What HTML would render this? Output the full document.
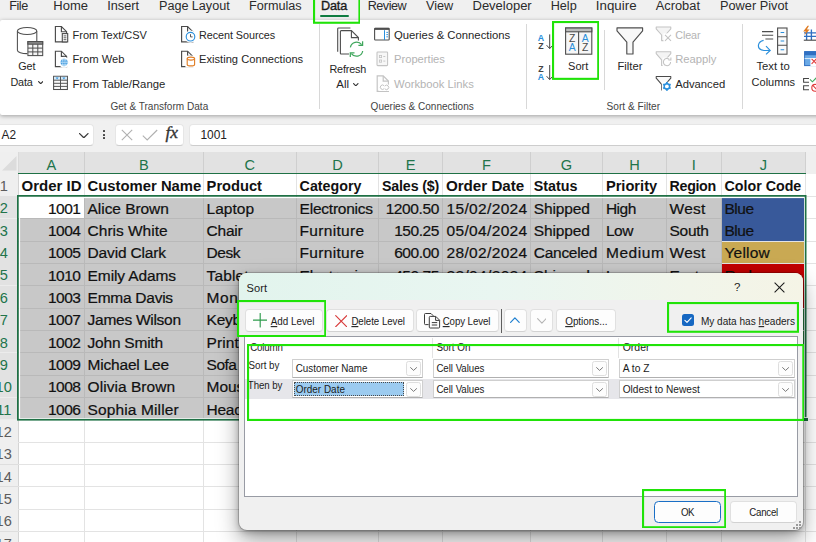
<!DOCTYPE html>
<html lang="en"><head><meta charset="utf-8"><title>Sort</title>
<style>
html,body{margin:0;padding:0;}
body{width:816px;height:542px;overflow:hidden;position:relative;background:#f0f0f0;font-family:"Liberation Sans",sans-serif;}
.t{position:absolute;line-height:1;white-space:pre;}
.b{position:absolute;box-sizing:content-box;}
u{text-decoration-thickness:1px;text-underline-offset:0.6px;}
</style></head><body>
<span class="t" style="left:9.30px;top:0px;font-size:12.65px;color:#2b2b2b;letter-spacing:-0.500px;">File</span>
<span class="t" style="left:53.30px;top:-1px;font-size:13.00px;color:#2b2b2b;">Home</span>
<span class="t" style="left:107.30px;top:0px;font-size:12.70px;color:#2b2b2b;letter-spacing:-0.010px;">Insert</span>
<span class="t" style="left:159.00px;top:0px;font-size:12.65px;color:#2b2b2b;letter-spacing:-0.033px;">Page Layout</span>
<span class="t" style="left:249.00px;top:0px;font-size:12.65px;color:#2b2b2b;letter-spacing:-0.007px;">Formulas</span>
<span class="t" style="left:367.70px;top:0px;font-size:12.65px;color:#2b2b2b;letter-spacing:-0.498px;">Review</span>
<span class="t" style="left:426.00px;top:0px;font-size:12.70px;color:#2b2b2b;">View</span>
<span class="t" style="left:472.50px;top:-1px;font-size:13.00px;color:#2b2b2b;letter-spacing:-0.010px;">Developer</span>
<span class="t" style="left:550.70px;top:0px;font-size:12.65px;color:#2b2b2b;">Help</span>
<span class="t" style="left:595.70px;top:-1px;font-size:13.30px;color:#2b2b2b;letter-spacing:0.050px;">Inquire</span>
<span class="t" style="left:655.70px;top:0px;font-size:12.85px;color:#2b2b2b;letter-spacing:0.005px;">Acrobat</span>
<span class="t" style="left:720.00px;top:0px;font-size:12.75px;color:#2b2b2b;">Power Pivot</span>
<span class="t" style="left:321.00px;top:0px;font-size:12.65px;color:#1a1a1a;letter-spacing:-0.152px;-webkit-text-stroke:0.35px #1a1a1a;">Data</span>
<div class="b" style="left:320.00px;top:14.70px;width:28.80px;height:2.20px;background:#107c41;border-radius:1.1px;"></div>
<div class="b" style="left:0.00px;top:19.50px;width:830.00px;height:95.50px;background:#fff;border-radius:2px 0 0 2px;box-shadow:0 1px 4px rgba(0,0,0,.34);"></div>
<span class="t" style="left:18.30px;top:61px;font-size:10.80px;color:#262626;letter-spacing:-0.144px;">Get</span>
<span class="t" style="left:10.50px;top:77px;font-size:10.80px;color:#262626;letter-spacing:-0.181px;">Data</span>
<span class="t" style="left:72.50px;top:30px;font-size:11.00px;color:#262626;">From Text/CSV</span>
<span class="t" style="left:72.50px;top:54px;font-size:11.15px;color:#262626;letter-spacing:0.008px;">From Web</span>
<span class="t" style="left:72.50px;top:79px;font-size:11.30px;color:#262626;">From Table/Range</span>
<span class="t" style="left:199.00px;top:30px;font-size:10.80px;color:#262626;letter-spacing:-0.049px;">Recent Sources</span>
<span class="t" style="left:199.00px;top:54px;font-size:11.15px;color:#262626;letter-spacing:0.008px;">Existing Connections</span>
<span class="t" style="left:110.40px;top:102px;font-size:10.05px;color:#444;letter-spacing:0.006px;">Get & Transform Data</span>
<div class="b" style="left:319.30px;top:24.00px;width:1.00px;height:85.00px;background:#d8d8d8;"></div>
<div class="b" style="left:525.50px;top:24.00px;width:1.00px;height:85.00px;background:#d8d8d8;"></div>
<div class="b" style="left:741.50px;top:24.00px;width:1.00px;height:85.00px;background:#d8d8d8;"></div>
<div class="b" style="left:604.30px;top:29.50px;width:1.00px;height:60.50px;background:#d8d8d8;"></div>
<span class="t" style="left:329.40px;top:64px;font-size:10.80px;color:#262626;letter-spacing:-0.150px;">Refresh</span>
<span class="t" style="left:336.30px;top:79px;font-size:11.40px;color:#262626;letter-spacing:0.023px;">All</span>
<span class="t" style="left:394.00px;top:30px;font-size:11.30px;color:#262626;">Queries & Connections</span>
<span class="t" style="left:394.00px;top:54px;font-size:11.20px;color:#b4b4b4;letter-spacing:-0.008px;">Properties</span>
<span class="t" style="left:394.00px;top:79px;font-size:11.25px;color:#b4b4b4;">Workbook Links</span>
<span class="t" style="left:370.60px;top:102px;font-size:10.05px;color:#444;letter-spacing:-0.008px;">Queries & Connections</span>
<span class="t" style="left:568.00px;top:61px;font-size:11.05px;color:#262626;letter-spacing:0.008px;">Sort</span>
<span class="t" style="left:617.50px;top:61px;font-size:11.25px;color:#262626;">Filter</span>
<span class="t" style="left:675.20px;top:30px;font-size:10.80px;color:#b4b4b4;letter-spacing:-0.103px;">Clear</span>
<span class="t" style="left:675.20px;top:54px;font-size:11.25px;color:#b4b4b4;letter-spacing:-0.015px;">Reapply</span>
<span class="t" style="left:675.20px;top:79px;font-size:11.25px;color:#262626;letter-spacing:-0.009px;">Advanced</span>
<span class="t" style="left:606.50px;top:102px;font-size:10.15px;color:#444;letter-spacing:0.009px;">Sort & Filter</span>
<span class="t" style="left:756.40px;top:61px;font-size:11.30px;color:#262626;letter-spacing:0.012px;">Text to</span>
<span class="t" style="left:751.60px;top:77px;font-size:11.00px;color:#262626;">Columns</span>
<svg class="b" style="left:37.60px;top:80.60px;" width="5.4" height="3.3" viewBox="0 0 5.4 3.3"><path d="M0.6 0.6 L2.7 2.6999999999999997 L4.800000000000001 0.6" fill="none" stroke="#333" stroke-width="1.15" stroke-linecap="round" stroke-linejoin="round"/></svg>
<svg class="b" style="left:353.40px;top:82.60px;" width="5.6" height="3.4" viewBox="0 0 5.6 3.4"><path d="M0.6 0.6 L2.8 2.8 L5.0 0.6" fill="none" stroke="#333" stroke-width="1.15" stroke-linecap="round" stroke-linejoin="round"/></svg>
<svg class="b" style="left:0;top:0" width="816" height="120" viewBox="0 0 816 120"><path d="M17.4 31 V50.2 a9.7 3.4 0 0 0 10 3.4 M36.8 31 V41" fill="none" stroke="#4e4e4e" stroke-width="1.05"/><ellipse cx="27.1" cy="31" rx="9.7" ry="3.5" fill="#fff" stroke="#4e4e4e" stroke-width="1.05"/><rect x="27.9" y="41.6" width="14.8" height="14" fill="#f4f4f4" stroke="#4e4e4e" stroke-width="1.05"/><rect x="27.9" y="41.6" width="14.8" height="2.6" fill="#8a8a8a" stroke="#4e4e4e" stroke-width="1.05"/><path d="M27.9 48.1 H42.7 M27.9 51.9 H42.7 M32.8 44.2 V55.6 M37.8 44.2 V55.6" fill="none" stroke="#4e4e4e" stroke-width="1"/><path d="M61.40 26.50 H55.40 V41.90 H66.60 V31.70 Z" fill="#fdfdfd" stroke="#4a4a4a" stroke-width="1.15" stroke-linejoin="miter"/><path d="M61.40 26.50 V31.70 H66.60" fill="none" stroke="#4a4a4a" stroke-width="1.15" stroke-linejoin="miter"/><rect x="62.3" y="33.6" width="5.4" height="8.3" fill="#fff" stroke="#4a4a4a" stroke-width="1.1"/><path d="M63.6 35.9 H66.4 M63.6 37.8 H66.4 M63.6 39.7 H66.4" stroke="#4a4a4a" stroke-width="0.9"/><path d="M61.40 51.20 H55.40 V66.60 H66.60 V56.40 Z" fill="#fdfdfd" stroke="#4a4a4a" stroke-width="1.15" stroke-linejoin="miter"/><path d="M61.40 51.20 V56.40 H66.60" fill="none" stroke="#4a4a4a" stroke-width="1.15" stroke-linejoin="miter"/><circle cx="64.1" cy="62.3" r="4.5" fill="#2a8fdc" stroke="#fff" stroke-width="2"/><path d="M59.8 62.3 H68.4 M64.1 58 V66.6 M61 59.8 H67.2 M61 64.8 H67.2" stroke="#d4ebfb" stroke-width="0.7" fill="none"/><ellipse cx="64.1" cy="62.3" rx="2" ry="4.3" fill="none" stroke="#d4ebfb" stroke-width="0.7"/><rect x="53.6" y="76.3" width="13.8" height="13.2" fill="#fafafa" stroke="#4e4e4e" stroke-width="1.05"/><rect x="54.1" y="76.8" width="12.8" height="3" fill="#d5eaf9"/><path d="M53.6 80.2 H67.4 M53.6 83.3 H67.4 M53.6 86.4 H67.4 M60.5 76.3 V89.5" stroke="#4e4e4e" stroke-width="0.95" fill="none"/><path d="M55.6 77.5 h3 l-1.5 1.7 Z M62.4 77.5 h3 l-1.5 1.7 Z" fill="#2a8fdc"/><path d="M187.60 26.50 H181.60 V41.90 H192.80 V31.70 Z" fill="#fdfdfd" stroke="#4a4a4a" stroke-width="1.15" stroke-linejoin="miter"/><path d="M187.60 26.50 V31.70 H192.80" fill="none" stroke="#4a4a4a" stroke-width="1.15" stroke-linejoin="miter"/><circle cx="190.5" cy="36.7" r="6.1" fill="#fff"/><circle cx="190.5" cy="36.7" r="4.3" fill="#fff" stroke="#2a8fdc" stroke-width="1.15"/><path d="M190.5 34.2 V36.9 H192.6" fill="none" stroke="#444" stroke-width="0.9"/><path d="M187.60 51.20 H181.60 V66.60 H192.80 V56.40 Z" fill="#fdfdfd" stroke="#4a4a4a" stroke-width="1.15" stroke-linejoin="miter"/><path d="M187.60 51.20 V56.40 H192.80" fill="none" stroke="#4a4a4a" stroke-width="1.15" stroke-linejoin="miter"/><rect x="185.4" y="55.6" width="11" height="12" fill="#fff"/><path d="M187.2 58.6 V64.4 a3.7 1.5 0 0 0 7.4 0 V58.6" fill="#fff" stroke="#e07c22" stroke-width="1.1"/><ellipse cx="190.9" cy="58.6" rx="3.7" ry="1.5" fill="#fff" stroke="#e07c22" stroke-width="1.1"/><path d="M350.4 28 H338.5 a0.8 0.8 0 0 0 -0.8 0.8 V51.8" fill="none" stroke="#4e4e4e" stroke-width="1.1"/><path d="M349 54 H341.2 a0.8 0.8 0 0 1 -0.8 -0.8 V31.4 a0.8 0.8 0 0 1 0.8 -0.8 H351.4 L358.4 37.6 V40.5" fill="none" stroke="#4e4e4e" stroke-width="1.1"/><path d="M351.4 30.8 V37.6 H358.2" fill="none" stroke="#4e4e4e" stroke-width="1.1"/><path d="M350.4 47.3 A6.3 6.3 0 0 1 361.6 44.6 M362.7 51 A6.3 6.3 0 0 1 351.4 53.6" fill="none" stroke="#3fa65c" stroke-width="1.25"/><path d="M362.6 41.2 V45.4 H358.4 M350.3 57 V52.8 H354.5" fill="none" stroke="#3fa65c" stroke-width="1.25"/><rect x="374.6" y="28.2" width="14.6" height="11.8" rx="0.8" fill="#fff" stroke="#4e4e4e" stroke-width="1.1"/><rect x="374.6" y="27.9" width="14.6" height="2" fill="#4e4e4e"/><path d="M384.5 30.2 V40" stroke="#2a8fdc" stroke-width="1"/><path d="M386.3 32.4 H388 M386.3 34.6 H388 M386.3 36.8 H388" stroke="#2a8fdc" stroke-width="0.9"/><rect x="377" y="52" width="10.6" height="13.6" rx="0.8" fill="#f7f7f7" stroke="#c3c3c3" stroke-width="1.05"/><rect x="379.4" y="55.4" width="2.2" height="2.2" fill="none" stroke="#c3c3c3" stroke-width="0.8"/><rect x="379.4" y="60" width="2.2" height="2.2" fill="none" stroke="#c3c3c3" stroke-width="0.8"/><path d="M383.3 56.5 H385.3 M383.3 61.1 H385.3" stroke="#c3c3c3" stroke-width="0.9"/><path d="M383.20 75.90 H377.20 V91.30 H388.40 V81.10 Z" fill="#fdfdfd" stroke="#c3c3c3" stroke-width="1.15" stroke-linejoin="miter"/><path d="M383.20 75.90 V81.10 H388.40" fill="none" stroke="#c3c3c3" stroke-width="1.15" stroke-linejoin="miter"/><rect x="379.2" y="84.6" width="10.4" height="6.4" fill="#fff"/><path d="M384.2 88.6 a2.2 2.2 0 1 1 0 -2.8 M384.8 86 a2.2 2.2 0 1 1 0 2.8" fill="none" stroke="#c3c3c3" stroke-width="1"/><text x="541" y="40.6" font-family="Liberation Sans, sans-serif" font-size="8.8" font-weight="bold" fill="#2a8fdc" text-anchor="middle">A</text><text x="541" y="49.2" font-family="Liberation Sans, sans-serif" font-size="8.8" font-weight="bold" fill="#444" text-anchor="middle">Z</text><text x="541" y="71.5" font-family="Liberation Sans, sans-serif" font-size="8.8" font-weight="bold" fill="#444" text-anchor="middle">Z</text><text x="541" y="80.1" font-family="Liberation Sans, sans-serif" font-size="8.8" font-weight="bold" fill="#2a8fdc" text-anchor="middle">A</text><path d="M549.7 34.4 V48.4 M546.6 45.2 L549.7 48.6 L552.8 45.2" fill="none" stroke="#444" stroke-width="1"/><path d="M549.7 65 V79.4 M546.6 76.2 L549.7 79.6 L552.8 76.2" fill="none" stroke="#444" stroke-width="1"/><rect x="565.6" y="28" width="26.2" height="26.2" fill="#f6f6f6" stroke="#4e4e4e" stroke-width="1.1"/><rect x="565.6" y="28" width="26.2" height="3.8" fill="#bdbdbd" stroke="#4e4e4e" stroke-width="1.1"/><path d="M578.6 31.8 V54.2" stroke="#4e4e4e" stroke-width="1.1"/><text x="572.2" y="41.6" font-family="Liberation Sans, sans-serif" font-size="10.4" font-weight="normal" fill="#4a4a4a" text-anchor="middle">Z</text><text x="572.2" y="51.4" font-family="Liberation Sans, sans-serif" font-size="10.4" font-weight="normal" fill="#2a8fdc" text-anchor="middle">A</text><text x="585.2" y="41.6" font-family="Liberation Sans, sans-serif" font-size="10.4" font-weight="normal" fill="#2a8fdc" text-anchor="middle">A</text><text x="585.2" y="51.4" font-family="Liberation Sans, sans-serif" font-size="10.4" font-weight="normal" fill="#4a4a4a" text-anchor="middle">Z</text><path d="M617 27.9 H642.6 V30.8 L633 42.2 V54 H626.8 V42.2 L617 30.8 Z" fill="#f8f8f8" stroke="#4e4e4e" stroke-width="1.15" stroke-linejoin="round"/><path d="M656.2 27 H670.8000000000001 V28.8 L665.4000000000001 35 V40.6 H661.6 V35 L656.2 28.8 Z" fill="#f4f4f4" stroke="#c3c3c3" stroke-width="1.05" stroke-linejoin="round"/><rect x="663.4" y="33.4" width="8.6" height="8.4" fill="#fff"/><path d="M665 34.8 L671 40.8 M671 34.8 L665 40.8" stroke="#c3c3c3" stroke-width="1.05"/><path d="M656.2 51.8 H670.8000000000001 V53.599999999999994 L665.4000000000001 59.8 V65.39999999999999 H661.6 V59.8 L656.2 53.599999999999994 Z" fill="#f4f4f4" stroke="#c3c3c3" stroke-width="1.05" stroke-linejoin="round"/><rect x="662.6" y="57.6" width="9.4" height="9.2" fill="#fff"/><path d="M670.6 62 a3.6 3.6 0 1 1 -1.4 -2.8 M670.9 57.6 V60 H668.4" fill="none" stroke="#c3c3c3" stroke-width="1.05"/><path d="M656.2 76.4 H670.8000000000001 V78.2 L665.4000000000001 84.4 V90.0 H661.6 V84.4 L656.2 78.2 Z" fill="#fafafa" stroke="#4a4a4a" stroke-width="1.05" stroke-linejoin="round"/><rect x="661.8" y="81.8" width="10" height="9.4" fill="#fff"/><circle cx="666.9" cy="86.4" r="2.7" fill="none" stroke="#2a8fdc" stroke-width="1.5"/><path d="M668.81 87.50 L670.62 88.55 M666.90 88.60 L666.90 90.70 M664.99 87.50 L663.18 88.55 M664.99 85.30 L663.18 84.25 M666.90 84.20 L666.90 82.10 M668.81 85.30 L670.62 84.25 " stroke="#2a8fdc" stroke-width="1.9" fill="none"/><circle cx="666.9" cy="86.4" r="0.9" fill="#fff"/><path d="M762 31.6 H773.2 M762 35.3 H773.2 M765.4 39 H773.2" stroke="#4e4e4e" stroke-width="1.05"/><path d="M763.6 40.4 C757.5 41.5 756.8 48.2 761.5 49.9 C764 50.7 767 50.6 769.8 50.4" fill="none" stroke="#2a8fdc" stroke-width="1.15"/><path d="M766 46.2 L770.2 50.4 L766 54.4" fill="none" stroke="#2a8fdc" stroke-width="1.15"/><rect x="777.6" y="28" width="9.4" height="26.2" fill="#fafafa" stroke="#4e4e4e" stroke-width="1.1"/><path d="M777.6 36.7 H787 M777.6 45.3 H787" stroke="#4e4e4e" stroke-width="1.05"/><path d="M780.6 32.4 H784.2 M780.6 41 H784.2 M780.6 49.7 H784.2" stroke="#2a8fdc" stroke-width="1.05"/><path d="M806.6 29.6 V40 M811.4 29.6 V40 M804 32.8 H816 M804 36.4 H816" stroke="#2f6fc2" stroke-width="1.35" fill="none"/><path d="M803.8 40.2 H816" stroke="#444" stroke-width="1.1"/><path d="M807.6 25.8 L803.2 31.6 H806 L804.2 35.6 L809.6 29.6 H806.8 L809 25.8 Z" fill="#e07c22"/><rect x="804.6" y="51.6" width="12" height="14" fill="#6aa9e6" stroke="#2f6fc2" stroke-width="1"/><rect x="804.6" y="51.6" width="12" height="3.6" fill="#2f6fc2"/><path d="M804.6 58.6 H816" stroke="#fff" stroke-width="0.8"/><rect x="810.4" y="58" width="6" height="8" fill="#fff"/><path d="M811.6 58.8 L816.5 63.8 M816.5 58.8 L811.6 63.8" stroke="#e03a3a" stroke-width="1.1"/><path d="M809 78.4 H803.6 V82.2 H809 M809 85.8 H803.6 V89.8 H809" fill="none" stroke="#444" stroke-width="1.05"/><path d="M810 79.4 L812.4 81.8 L816.5 77.6" fill="none" stroke="#3fa65c" stroke-width="1.1"/><circle cx="815.2" cy="87.8" r="3.4" fill="#fff" stroke="#e03a3a" stroke-width="1.1"/><path d="M812.8 85.4 L817 89.8" stroke="#e03a3a" stroke-width="1.1"/></svg>
<div class="b" style="left:-6.00px;top:123.60px;width:100.00px;height:22.00px;background:#fff;border-radius:4px;border:1px solid #e6e6e6;border-bottom:1px solid #cdcdcd;box-sizing:border-box;"></div>
<div class="b" style="left:114.50px;top:123.60px;width:69.20px;height:22.00px;background:#fff;border-radius:4px;border:1px solid #e6e6e6;border-bottom:1px solid #cdcdcd;box-sizing:border-box;"></div>
<div class="b" style="left:189.30px;top:123.60px;width:640.00px;height:22.00px;background:#fff;border-radius:4px;border:1px solid #e6e6e6;border-bottom:1px solid #cdcdcd;box-sizing:border-box;"></div>
<span class="t" style="left:1.50px;top:130px;font-size:11.85px;color:#222;letter-spacing:-0.016px;">A2</span>
<span class="t" style="left:200.40px;top:130px;font-size:11.90px;color:#222;letter-spacing:0.007px;">1001</span>
<svg class="b" style="left:79.40px;top:132.60px;" width="9.6" height="5.4" viewBox="0 0 9.6 5.4"><path d="M0.6 0.6 L4.8 4.800000000000001 L9.0 0.6" fill="none" stroke="#3a3a3a" stroke-width="1.3" stroke-linecap="round" stroke-linejoin="round"/></svg>
<div class="b" style="left:103.30px;top:130.00px;width:2.00px;height:2.00px;background:#444;border-radius:0.5px;"></div>
<div class="b" style="left:103.30px;top:133.60px;width:2.00px;height:2.00px;background:#444;border-radius:0.5px;"></div>
<div class="b" style="left:103.30px;top:137.20px;width:2.00px;height:2.00px;background:#444;border-radius:0.5px;"></div>
<svg class="b" style="left:120.50px;top:129.00px;" width="12" height="12" viewBox="0 0 12 12"><path d="M0.8 0.8 L11.2 11.2 M11.2 0.8 L0.8 11.2" stroke="#b0b0b0" stroke-width="1.1" fill="none"/></svg>
<svg class="b" style="left:141.50px;top:129.00px;" width="16" height="12" viewBox="0 0 16 12"><path d="M0.8 6.6 L5.2 11 L15.2 1" stroke="#b0b0b0" stroke-width="1.1" fill="none"/></svg>
<span class="t" style="left:165.6px;top:123.6px;font-size:17.5px;color:#333;font-family:'Liberation Serif',serif;font-style:italic;font-weight:normal;-webkit-text-stroke:0.35px #333;letter-spacing:-0.2px;">fx</span>
<div class="b" style="left:0.00px;top:152.20px;width:816.00px;height:400.00px;background:#fff;"></div>
<div class="b" style="left:0.00px;top:152.20px;width:18.30px;height:21.80px;background:#efefef;"></div>
<div class="b" style="left:18.30px;top:152.20px;width:787.40px;height:21.80px;background:#e2e2e2;"></div>
<div class="b" style="left:805.70px;top:152.20px;width:100.00px;height:21.80px;background:#efefef;"></div>
<svg class="b" style="left:2.00px;top:156.00px;" width="14.5" height="14.5" viewBox="0 0 14.5 14.5"><path d="M14.5 0 L14.5 14.5 L0 14.5 Z" fill="#dcdcdc"/></svg>
<div class="b" style="left:83.80px;top:152.20px;width:1.00px;height:20.60px;background:#cfcfcf;"></div>
<div class="b" style="left:202.80px;top:152.20px;width:1.00px;height:20.60px;background:#cfcfcf;"></div>
<div class="b" style="left:295.80px;top:152.20px;width:1.00px;height:20.60px;background:#cfcfcf;"></div>
<div class="b" style="left:378.10px;top:152.20px;width:1.00px;height:20.60px;background:#cfcfcf;"></div>
<div class="b" style="left:442.10px;top:152.20px;width:1.00px;height:20.60px;background:#cfcfcf;"></div>
<div class="b" style="left:530.00px;top:152.20px;width:1.00px;height:20.60px;background:#cfcfcf;"></div>
<div class="b" style="left:602.10px;top:152.20px;width:1.00px;height:20.60px;background:#cfcfcf;"></div>
<div class="b" style="left:665.80px;top:152.20px;width:1.00px;height:20.60px;background:#cfcfcf;"></div>
<div class="b" style="left:720.70px;top:152.20px;width:1.00px;height:20.60px;background:#cfcfcf;"></div>
<div class="b" style="left:805.20px;top:152.20px;width:1.00px;height:21.80px;background:#d0d0d0;"></div>
<div class="b" style="left:17.60px;top:152.20px;width:1.00px;height:21.80px;background:#dadada;"></div>
<span class="t" style="left:46.43px;top:158px;font-size:14.60px;color:#21744a;">A</span>
<span class="t" style="left:138.93px;top:158px;font-size:14.60px;color:#21744a;">B</span>
<span class="t" style="left:244.53px;top:158px;font-size:14.60px;color:#21744a;">C</span>
<span class="t" style="left:332.18px;top:158px;font-size:14.60px;color:#21744a;">D</span>
<span class="t" style="left:405.73px;top:158px;font-size:14.60px;color:#21744a;">E</span>
<span class="t" style="left:482.09px;top:158px;font-size:14.60px;color:#21744a;">F</span>
<span class="t" style="left:560.87px;top:158px;font-size:14.60px;color:#21744a;">G</span>
<span class="t" style="left:629.18px;top:158px;font-size:14.60px;color:#21744a;">H</span>
<span class="t" style="left:691.72px;top:158px;font-size:14.60px;color:#21744a;">I</span>
<span class="t" style="left:759.80px;top:158px;font-size:14.60px;color:#21744a;">J</span>
<div class="b" style="left:0.00px;top:174.00px;width:18.30px;height:22.35px;background:#efefef;"></div>
<div class="b" style="left:0.00px;top:195.85px;width:18.30px;height:1.00px;background:#dedede;"></div>
<span class="t" style="left:-0.36px;top:179px;font-size:14.60px;color:#5c5c5c;">1</span>
<div class="b" style="left:0.00px;top:196.35px;width:18.30px;height:22.35px;background:#e2e2e2;"></div>
<div class="b" style="left:0.00px;top:218.20px;width:18.30px;height:1.00px;background:#ececec;"></div>
<span class="t" style="left:-0.36px;top:201px;font-size:14.60px;color:#21744a;">2</span>
<div class="b" style="left:0.00px;top:218.70px;width:18.30px;height:22.35px;background:#e2e2e2;"></div>
<div class="b" style="left:0.00px;top:240.55px;width:18.30px;height:1.00px;background:#ececec;"></div>
<span class="t" style="left:-0.36px;top:224px;font-size:14.60px;color:#21744a;">3</span>
<div class="b" style="left:0.00px;top:241.05px;width:18.30px;height:22.35px;background:#e2e2e2;"></div>
<div class="b" style="left:0.00px;top:262.90px;width:18.30px;height:1.00px;background:#ececec;"></div>
<span class="t" style="left:-0.36px;top:246px;font-size:14.60px;color:#21744a;">4</span>
<div class="b" style="left:0.00px;top:263.40px;width:18.30px;height:22.35px;background:#e2e2e2;"></div>
<div class="b" style="left:0.00px;top:285.25px;width:18.30px;height:1.00px;background:#ececec;"></div>
<span class="t" style="left:-0.36px;top:268px;font-size:14.60px;color:#21744a;">5</span>
<div class="b" style="left:0.00px;top:285.75px;width:18.30px;height:22.35px;background:#e2e2e2;"></div>
<div class="b" style="left:0.00px;top:307.60px;width:18.30px;height:1.00px;background:#ececec;"></div>
<span class="t" style="left:-0.36px;top:291px;font-size:14.60px;color:#21744a;">6</span>
<div class="b" style="left:0.00px;top:308.10px;width:18.30px;height:22.35px;background:#e2e2e2;"></div>
<div class="b" style="left:0.00px;top:329.95px;width:18.30px;height:1.00px;background:#ececec;"></div>
<span class="t" style="left:-0.36px;top:313px;font-size:14.60px;color:#21744a;">7</span>
<div class="b" style="left:0.00px;top:330.45px;width:18.30px;height:22.35px;background:#e2e2e2;"></div>
<div class="b" style="left:0.00px;top:352.30px;width:18.30px;height:1.00px;background:#ececec;"></div>
<span class="t" style="left:-0.36px;top:336px;font-size:14.60px;color:#21744a;">8</span>
<div class="b" style="left:0.00px;top:352.80px;width:18.30px;height:22.35px;background:#e2e2e2;"></div>
<div class="b" style="left:0.00px;top:374.65px;width:18.30px;height:1.00px;background:#ececec;"></div>
<span class="t" style="left:-0.36px;top:358px;font-size:14.60px;color:#21744a;">9</span>
<div class="b" style="left:0.00px;top:375.15px;width:18.30px;height:22.35px;background:#e2e2e2;"></div>
<div class="b" style="left:0.00px;top:397.00px;width:18.30px;height:1.00px;background:#ececec;"></div>
<span class="t" style="left:-4.42px;top:380px;font-size:14.60px;color:#21744a;">10</span>
<div class="b" style="left:0.00px;top:397.50px;width:18.30px;height:22.35px;background:#e2e2e2;"></div>
<div class="b" style="left:0.00px;top:419.35px;width:18.30px;height:1.00px;background:#ececec;"></div>
<span class="t" style="left:-3.88px;top:403px;font-size:14.60px;color:#21744a;">11</span>
<div class="b" style="left:0.00px;top:419.85px;width:18.30px;height:22.35px;background:#efefef;"></div>
<div class="b" style="left:0.00px;top:441.70px;width:18.30px;height:1.00px;background:#dedede;"></div>
<span class="t" style="left:-4.42px;top:425px;font-size:14.60px;color:#5c5c5c;">12</span>
<div class="b" style="left:0.00px;top:442.20px;width:18.30px;height:22.35px;background:#efefef;"></div>
<div class="b" style="left:0.00px;top:464.05px;width:18.30px;height:1.00px;background:#dedede;"></div>
<span class="t" style="left:-4.42px;top:447px;font-size:14.60px;color:#5c5c5c;">13</span>
<div class="b" style="left:0.00px;top:464.55px;width:18.30px;height:22.35px;background:#efefef;"></div>
<div class="b" style="left:0.00px;top:486.40px;width:18.30px;height:1.00px;background:#dedede;"></div>
<span class="t" style="left:-4.42px;top:470px;font-size:14.60px;color:#5c5c5c;">14</span>
<div class="b" style="left:0.00px;top:486.90px;width:18.30px;height:22.35px;background:#efefef;"></div>
<div class="b" style="left:0.00px;top:508.75px;width:18.30px;height:1.00px;background:#dedede;"></div>
<span class="t" style="left:-4.42px;top:492px;font-size:14.60px;color:#5c5c5c;">15</span>
<div class="b" style="left:0.00px;top:509.25px;width:18.30px;height:22.35px;background:#efefef;"></div>
<div class="b" style="left:0.00px;top:531.10px;width:18.30px;height:1.00px;background:#dedede;"></div>
<span class="t" style="left:-4.42px;top:514px;font-size:14.60px;color:#5c5c5c;">16</span>
<div class="b" style="left:0.00px;top:531.60px;width:18.30px;height:22.35px;background:#efefef;"></div>
<div class="b" style="left:0.00px;top:553.45px;width:18.30px;height:1.00px;background:#dedede;"></div>
<span class="t" style="left:-4.42px;top:537px;font-size:14.60px;color:#5c5c5c;">17</span>
<div class="b" style="left:17.60px;top:174.00px;width:1.00px;height:400.00px;background:#d4d4d4;"></div>
<div class="b" style="left:18.30px;top:196.35px;width:787.40px;height:223.50px;background:#c8c8c8;"></div>
<div class="b" style="left:18.30px;top:196.35px;width:66.00px;height:22.35px;background:#fff;"></div>
<div class="b" style="left:18.30px;top:195.85px;width:816.00px;height:1.00px;background:#e3e3e3;"></div>
<div class="b" style="left:18.30px;top:218.20px;width:816.00px;height:1.00px;background:#e3e3e3;"></div>
<div class="b" style="left:18.30px;top:218.20px;width:702.90px;height:1.00px;background:#b9b9b9;"></div>
<div class="b" style="left:18.30px;top:240.55px;width:816.00px;height:1.00px;background:#e3e3e3;"></div>
<div class="b" style="left:18.30px;top:240.55px;width:702.90px;height:1.00px;background:#b9b9b9;"></div>
<div class="b" style="left:18.30px;top:262.90px;width:816.00px;height:1.00px;background:#e3e3e3;"></div>
<div class="b" style="left:18.30px;top:262.90px;width:702.90px;height:1.00px;background:#b9b9b9;"></div>
<div class="b" style="left:18.30px;top:285.25px;width:816.00px;height:1.00px;background:#e3e3e3;"></div>
<div class="b" style="left:18.30px;top:285.25px;width:702.90px;height:1.00px;background:#b9b9b9;"></div>
<div class="b" style="left:18.30px;top:307.60px;width:816.00px;height:1.00px;background:#e3e3e3;"></div>
<div class="b" style="left:18.30px;top:307.60px;width:702.90px;height:1.00px;background:#b9b9b9;"></div>
<div class="b" style="left:18.30px;top:329.95px;width:816.00px;height:1.00px;background:#e3e3e3;"></div>
<div class="b" style="left:18.30px;top:329.95px;width:702.90px;height:1.00px;background:#b9b9b9;"></div>
<div class="b" style="left:18.30px;top:352.30px;width:816.00px;height:1.00px;background:#e3e3e3;"></div>
<div class="b" style="left:18.30px;top:352.30px;width:702.90px;height:1.00px;background:#b9b9b9;"></div>
<div class="b" style="left:18.30px;top:374.65px;width:816.00px;height:1.00px;background:#e3e3e3;"></div>
<div class="b" style="left:18.30px;top:374.65px;width:702.90px;height:1.00px;background:#b9b9b9;"></div>
<div class="b" style="left:18.30px;top:397.00px;width:816.00px;height:1.00px;background:#e3e3e3;"></div>
<div class="b" style="left:18.30px;top:397.00px;width:702.90px;height:1.00px;background:#b9b9b9;"></div>
<div class="b" style="left:18.30px;top:419.35px;width:816.00px;height:1.00px;background:#e3e3e3;"></div>
<div class="b" style="left:18.30px;top:441.70px;width:816.00px;height:1.00px;background:#e3e3e3;"></div>
<div class="b" style="left:18.30px;top:464.05px;width:816.00px;height:1.00px;background:#e3e3e3;"></div>
<div class="b" style="left:18.30px;top:486.40px;width:816.00px;height:1.00px;background:#e3e3e3;"></div>
<div class="b" style="left:18.30px;top:508.75px;width:816.00px;height:1.00px;background:#e3e3e3;"></div>
<div class="b" style="left:18.30px;top:531.10px;width:816.00px;height:1.00px;background:#e3e3e3;"></div>
<div class="b" style="left:18.30px;top:553.45px;width:816.00px;height:1.00px;background:#e3e3e3;"></div>
<div class="b" style="left:83.80px;top:174.00px;width:1.00px;height:400.00px;background:#e3e3e3;"></div>
<div class="b" style="left:83.80px;top:196.35px;width:1.00px;height:223.50px;background:#b9b9b9;"></div>
<div class="b" style="left:202.80px;top:174.00px;width:1.00px;height:400.00px;background:#e3e3e3;"></div>
<div class="b" style="left:202.80px;top:196.35px;width:1.00px;height:223.50px;background:#b9b9b9;"></div>
<div class="b" style="left:295.80px;top:174.00px;width:1.00px;height:400.00px;background:#e3e3e3;"></div>
<div class="b" style="left:295.80px;top:196.35px;width:1.00px;height:223.50px;background:#b9b9b9;"></div>
<div class="b" style="left:378.10px;top:174.00px;width:1.00px;height:400.00px;background:#e3e3e3;"></div>
<div class="b" style="left:378.10px;top:196.35px;width:1.00px;height:223.50px;background:#b9b9b9;"></div>
<div class="b" style="left:442.10px;top:174.00px;width:1.00px;height:400.00px;background:#e3e3e3;"></div>
<div class="b" style="left:442.10px;top:196.35px;width:1.00px;height:223.50px;background:#b9b9b9;"></div>
<div class="b" style="left:530.00px;top:174.00px;width:1.00px;height:400.00px;background:#e3e3e3;"></div>
<div class="b" style="left:530.00px;top:196.35px;width:1.00px;height:223.50px;background:#b9b9b9;"></div>
<div class="b" style="left:602.10px;top:174.00px;width:1.00px;height:400.00px;background:#e3e3e3;"></div>
<div class="b" style="left:602.10px;top:196.35px;width:1.00px;height:223.50px;background:#b9b9b9;"></div>
<div class="b" style="left:665.80px;top:174.00px;width:1.00px;height:400.00px;background:#e3e3e3;"></div>
<div class="b" style="left:665.80px;top:196.35px;width:1.00px;height:223.50px;background:#b9b9b9;"></div>
<div class="b" style="left:720.70px;top:174.00px;width:1.00px;height:400.00px;background:#e3e3e3;"></div>
<div class="b" style="left:720.70px;top:196.35px;width:1.00px;height:223.50px;background:#b9b9b9;"></div>
<div class="b" style="left:805.20px;top:174.00px;width:1.00px;height:400.00px;background:#e3e3e3;"></div>
<div class="b" style="left:721.70px;top:196.85px;width:84.00px;height:21.85px;background:#38599a;"></div>
<div class="b" style="left:721.70px;top:219.20px;width:84.00px;height:21.85px;background:#38599a;"></div>
<div class="b" style="left:721.70px;top:241.55px;width:84.00px;height:21.85px;background:#c9a953;"></div>
<div class="b" style="left:721.70px;top:263.90px;width:84.00px;height:21.85px;background:#c20000;"></div>
<div class="b" style="left:721.70px;top:286.25px;width:84.00px;height:21.85px;background:#c20000;"></div>
<div class="b" style="left:721.70px;top:308.60px;width:84.00px;height:21.85px;background:#2f8f4a;"></div>
<div class="b" style="left:721.70px;top:330.95px;width:84.00px;height:21.85px;background:#2f8f4a;"></div>
<div class="b" style="left:721.70px;top:353.30px;width:84.00px;height:21.85px;background:#c9a953;"></div>
<div class="b" style="left:721.70px;top:375.65px;width:84.00px;height:21.85px;background:#38599a;"></div>
<div class="b" style="left:721.70px;top:398.00px;width:84.00px;height:21.85px;background:#2f8f4a;"></div>
<div class="b" style="left:18.30px;top:172.80px;width:788.20px;height:1.60px;background:#1f7145;"></div>
<svg class="b" style="left:18.90px;top:196.70px;" width="786.10" height="222.20"><rect x="0.55" y="0.55" width="785.00" height="221.10" rx="0" fill="none" stroke="#fff" stroke-width="1.1"/></svg>
<svg class="b" style="left:17.20px;top:195.00px;" width="789.50" height="225.60"><rect x="0.85" y="0.85" width="787.80" height="223.90" rx="0" fill="none" stroke="#1f7145" stroke-width="1.7"/></svg>
<div class="b" style="left:804.00px;top:418.30px;width:3.80px;height:3.20px;background:#1b6a3f;box-shadow:0 0 0 0.9px #fff;"></div>
<span class="t" style="left:21.60px;top:178px;font-size:15.00px;color:#111;font-weight:bold;">Order ID</span>
<span class="t" style="left:87.60px;top:179px;font-size:14.85px;color:#111;letter-spacing:-0.012px;font-weight:bold;">Customer Name</span>
<span class="t" style="left:206.60px;top:179px;font-size:14.70px;color:#111;letter-spacing:-0.011px;font-weight:bold;">Product</span>
<span class="t" style="left:299.60px;top:179px;font-size:14.25px;color:#111;font-weight:bold;">Category</span>
<span class="t" style="left:381.90px;top:179px;font-size:14.25px;color:#111;letter-spacing:-0.142px;font-weight:bold;">Sales ($)</span>
<span class="t" style="left:445.90px;top:178px;font-size:15.20px;color:#111;letter-spacing:-0.009px;font-weight:bold;">Order Date</span>
<span class="t" style="left:533.80px;top:179px;font-size:14.30px;color:#111;letter-spacing:0.013px;font-weight:bold;">Status</span>
<span class="t" style="left:605.90px;top:179px;font-size:14.65px;color:#111;font-weight:bold;">Priority</span>
<span class="t" style="left:669.60px;top:179px;font-size:14.25px;color:#111;letter-spacing:-0.342px;font-weight:bold;">Region</span>
<span class="t" style="left:724.50px;top:179px;font-size:14.25px;color:#111;font-weight:bold;">Color Code</span>
<span class="t" style="left:48.01px;top:201px;font-size:15.50px;color:#111;letter-spacing:-0.500px;-webkit-text-stroke:0.22px #111;">1001</span>
<span class="t" style="left:87.60px;top:201px;font-size:15.50px;color:#111;letter-spacing:-0.059px;-webkit-text-stroke:0.22px #111;">Alice Brown</span>
<span class="t" style="left:206.60px;top:201px;font-size:15.50px;color:#111;letter-spacing:0.014px;-webkit-text-stroke:0.22px #111;">Laptop</span>
<span class="t" style="left:299.60px;top:201px;font-size:15.50px;color:#111;letter-spacing:-0.230px;-webkit-text-stroke:0.22px #111;">Electronics</span>
<span class="t" style="left:385.64px;top:201px;font-size:15.50px;color:#111;letter-spacing:-0.395px;-webkit-text-stroke:0.22px #111;">1200.50</span>
<span class="t" style="left:446.54px;top:201px;font-size:15.50px;color:#111;letter-spacing:0.342px;-webkit-text-stroke:0.22px #111;">15/02/2024</span>
<span class="t" style="left:533.80px;top:201px;font-size:15.50px;color:#111;letter-spacing:-0.147px;-webkit-text-stroke:0.22px #111;">Shipped</span>
<span class="t" style="left:605.90px;top:201px;font-size:15.50px;color:#111;letter-spacing:-0.500px;-webkit-text-stroke:0.22px #111;">High</span>
<span class="t" style="left:669.60px;top:201px;font-size:15.50px;color:#111;letter-spacing:0.190px;-webkit-text-stroke:0.22px #111;">West</span>
<span class="t" style="left:724.50px;top:201px;font-size:15.50px;color:#111;letter-spacing:-0.500px;-webkit-text-stroke:0.22px #111;">Blue</span>
<span class="t" style="left:48.01px;top:223px;font-size:15.50px;color:#111;letter-spacing:-0.500px;-webkit-text-stroke:0.22px #111;">1004</span>
<span class="t" style="left:87.60px;top:223px;font-size:15.50px;color:#111;letter-spacing:-0.014px;-webkit-text-stroke:0.22px #111;">Chris White</span>
<span class="t" style="left:206.60px;top:223px;font-size:15.50px;color:#111;letter-spacing:-0.261px;-webkit-text-stroke:0.22px #111;">Chair</span>
<span class="t" style="left:299.60px;top:223px;font-size:15.50px;color:#111;letter-spacing:0.312px;-webkit-text-stroke:0.22px #111;">Furniture</span>
<span class="t" style="left:394.16px;top:223px;font-size:15.50px;color:#111;letter-spacing:-0.458px;-webkit-text-stroke:0.22px #111;">150.25</span>
<span class="t" style="left:446.54px;top:223px;font-size:15.50px;color:#111;letter-spacing:0.342px;-webkit-text-stroke:0.22px #111;">05/04/2024</span>
<span class="t" style="left:533.80px;top:223px;font-size:15.50px;color:#111;letter-spacing:-0.147px;-webkit-text-stroke:0.22px #111;">Shipped</span>
<span class="t" style="left:605.90px;top:223px;font-size:15.50px;color:#111;letter-spacing:-0.500px;-webkit-text-stroke:0.22px #111;">Low</span>
<span class="t" style="left:669.60px;top:223px;font-size:15.50px;color:#111;letter-spacing:-0.333px;-webkit-text-stroke:0.22px #111;">South</span>
<span class="t" style="left:724.50px;top:223px;font-size:15.50px;color:#111;letter-spacing:-0.500px;-webkit-text-stroke:0.22px #111;">Blue</span>
<span class="t" style="left:48.01px;top:245px;font-size:15.50px;color:#111;letter-spacing:-0.500px;-webkit-text-stroke:0.22px #111;">1005</span>
<span class="t" style="left:87.60px;top:245px;font-size:15.50px;color:#111;letter-spacing:-0.171px;-webkit-text-stroke:0.22px #111;">David Clark</span>
<span class="t" style="left:206.60px;top:245px;font-size:15.50px;color:#111;letter-spacing:-0.500px;-webkit-text-stroke:0.22px #111;">Desk</span>
<span class="t" style="left:299.60px;top:245px;font-size:15.50px;color:#111;letter-spacing:0.312px;-webkit-text-stroke:0.22px #111;">Furniture</span>
<span class="t" style="left:394.16px;top:245px;font-size:15.50px;color:#111;letter-spacing:-0.458px;-webkit-text-stroke:0.22px #111;">600.00</span>
<span class="t" style="left:446.54px;top:245px;font-size:15.50px;color:#111;letter-spacing:0.342px;-webkit-text-stroke:0.22px #111;">28/02/2024</span>
<span class="t" style="left:533.80px;top:245px;font-size:15.50px;color:#111;letter-spacing:-0.284px;-webkit-text-stroke:0.22px #111;">Canceled</span>
<span class="t" style="left:605.90px;top:245px;font-size:15.50px;color:#111;letter-spacing:0.580px;-webkit-text-stroke:0.22px #111;">Medium</span>
<span class="t" style="left:669.60px;top:245px;font-size:15.50px;color:#111;letter-spacing:0.190px;-webkit-text-stroke:0.22px #111;">West</span>
<span class="t" style="left:724.50px;top:245px;font-size:15.50px;color:#111;letter-spacing:0.190px;-webkit-text-stroke:0.22px #111;">Yellow</span>
<span class="t" style="left:48.01px;top:268px;font-size:15.50px;color:#111;letter-spacing:-0.500px;-webkit-text-stroke:0.22px #111;">1010</span>
<span class="t" style="left:87.60px;top:268px;font-size:15.50px;color:#111;letter-spacing:-0.109px;-webkit-text-stroke:0.22px #111;">Emily Adams</span>
<span class="t" style="left:206.60px;top:268px;font-size:15.50px;color:#111;letter-spacing:0.112px;-webkit-text-stroke:0.22px #111;">Tablet</span>
<span class="t" style="left:299.60px;top:268px;font-size:15.50px;color:#111;letter-spacing:-0.230px;-webkit-text-stroke:0.22px #111;">Electronics</span>
<span class="t" style="left:394.16px;top:268px;font-size:15.50px;color:#111;letter-spacing:-0.458px;-webkit-text-stroke:0.22px #111;">450.75</span>
<span class="t" style="left:446.54px;top:268px;font-size:15.50px;color:#111;letter-spacing:0.342px;-webkit-text-stroke:0.22px #111;">22/04/2024</span>
<span class="t" style="left:533.80px;top:268px;font-size:15.50px;color:#111;letter-spacing:-0.147px;-webkit-text-stroke:0.22px #111;">Shipped</span>
<span class="t" style="left:605.90px;top:268px;font-size:15.50px;color:#111;letter-spacing:-0.500px;-webkit-text-stroke:0.22px #111;">Low</span>
<span class="t" style="left:669.60px;top:268px;font-size:15.50px;color:#111;letter-spacing:-0.500px;-webkit-text-stroke:0.22px #111;">East</span>
<span class="t" style="left:724.50px;top:268px;font-size:15.50px;color:#111;letter-spacing:-0.500px;-webkit-text-stroke:0.22px #111;">Red</span>
<span class="t" style="left:48.01px;top:290px;font-size:15.50px;color:#111;letter-spacing:-0.500px;-webkit-text-stroke:0.22px #111;">1003</span>
<span class="t" style="left:87.60px;top:290px;font-size:15.50px;color:#111;letter-spacing:-0.265px;-webkit-text-stroke:0.22px #111;">Emma Davis</span>
<span class="t" style="left:206.60px;top:290px;font-size:15.50px;color:#111;letter-spacing:0.600px;-webkit-text-stroke:0.22px #111;">Monitor</span>
<span class="t" style="left:299.60px;top:290px;font-size:15.50px;color:#111;letter-spacing:-0.230px;-webkit-text-stroke:0.22px #111;">Electronics</span>
<span class="t" style="left:394.16px;top:290px;font-size:15.50px;color:#111;letter-spacing:-0.458px;-webkit-text-stroke:0.22px #111;">320.00</span>
<span class="t" style="left:446.54px;top:290px;font-size:15.50px;color:#111;letter-spacing:0.342px;-webkit-text-stroke:0.22px #111;">10/03/2024</span>
<span class="t" style="left:533.80px;top:290px;font-size:15.50px;color:#111;letter-spacing:-0.414px;-webkit-text-stroke:0.22px #111;">Pending</span>
<span class="t" style="left:605.90px;top:290px;font-size:15.50px;color:#111;letter-spacing:-0.500px;-webkit-text-stroke:0.22px #111;">High</span>
<span class="t" style="left:669.60px;top:290px;font-size:15.50px;color:#111;letter-spacing:0.290px;-webkit-text-stroke:0.22px #111;">North</span>
<span class="t" style="left:724.50px;top:290px;font-size:15.50px;color:#111;letter-spacing:-0.500px;-webkit-text-stroke:0.22px #111;">Red</span>
<span class="t" style="left:48.01px;top:312px;font-size:15.50px;color:#111;letter-spacing:-0.500px;-webkit-text-stroke:0.22px #111;">1007</span>
<span class="t" style="left:87.60px;top:312px;font-size:15.50px;color:#111;letter-spacing:-0.272px;-webkit-text-stroke:0.22px #111;">James Wilson</span>
<span class="t" style="left:206.60px;top:312px;font-size:15.50px;color:#111;letter-spacing:-0.291px;-webkit-text-stroke:0.22px #111;">Keyboard</span>
<span class="t" style="left:299.60px;top:312px;font-size:15.50px;color:#111;letter-spacing:-0.230px;-webkit-text-stroke:0.22px #111;">Electronics</span>
<span class="t" style="left:402.47px;top:312px;font-size:15.50px;color:#111;letter-spacing:-0.500px;-webkit-text-stroke:0.22px #111;">75.99</span>
<span class="t" style="left:446.54px;top:312px;font-size:15.50px;color:#111;letter-spacing:0.342px;-webkit-text-stroke:0.22px #111;">18/03/2024</span>
<span class="t" style="left:533.80px;top:312px;font-size:15.50px;color:#111;letter-spacing:-0.147px;-webkit-text-stroke:0.22px #111;">Shipped</span>
<span class="t" style="left:605.90px;top:312px;font-size:15.50px;color:#111;letter-spacing:0.580px;-webkit-text-stroke:0.22px #111;">Medium</span>
<span class="t" style="left:669.60px;top:312px;font-size:15.50px;color:#111;letter-spacing:-0.500px;-webkit-text-stroke:0.22px #111;">East</span>
<span class="t" style="left:724.50px;top:312px;font-size:15.50px;color:#111;letter-spacing:-0.500px;-webkit-text-stroke:0.22px #111;">Green</span>
<span class="t" style="left:48.01px;top:335px;font-size:15.50px;color:#111;letter-spacing:-0.500px;-webkit-text-stroke:0.22px #111;">1002</span>
<span class="t" style="left:87.60px;top:335px;font-size:15.50px;color:#111;letter-spacing:-0.231px;-webkit-text-stroke:0.22px #111;">John Smith</span>
<span class="t" style="left:206.60px;top:335px;font-size:15.50px;color:#111;letter-spacing:0.084px;-webkit-text-stroke:0.22px #111;">Printer</span>
<span class="t" style="left:299.60px;top:335px;font-size:15.50px;color:#111;letter-spacing:-0.230px;-webkit-text-stroke:0.22px #111;">Electronics</span>
<span class="t" style="left:394.16px;top:335px;font-size:15.50px;color:#111;letter-spacing:-0.458px;-webkit-text-stroke:0.22px #111;">210.40</span>
<span class="t" style="left:446.54px;top:335px;font-size:15.50px;color:#111;letter-spacing:0.342px;-webkit-text-stroke:0.22px #111;">01/03/2024</span>
<span class="t" style="left:533.80px;top:335px;font-size:15.50px;color:#111;letter-spacing:-0.414px;-webkit-text-stroke:0.22px #111;">Pending</span>
<span class="t" style="left:605.90px;top:335px;font-size:15.50px;color:#111;letter-spacing:-0.500px;-webkit-text-stroke:0.22px #111;">Low</span>
<span class="t" style="left:669.60px;top:335px;font-size:15.50px;color:#111;letter-spacing:-0.333px;-webkit-text-stroke:0.22px #111;">South</span>
<span class="t" style="left:724.50px;top:335px;font-size:15.50px;color:#111;letter-spacing:-0.500px;-webkit-text-stroke:0.22px #111;">Green</span>
<span class="t" style="left:48.01px;top:357px;font-size:15.50px;color:#111;letter-spacing:-0.500px;-webkit-text-stroke:0.22px #111;">1009</span>
<span class="t" style="left:87.60px;top:357px;font-size:15.50px;color:#111;letter-spacing:-0.205px;-webkit-text-stroke:0.22px #111;">Michael Lee</span>
<span class="t" style="left:206.60px;top:357px;font-size:15.50px;color:#111;letter-spacing:-0.500px;-webkit-text-stroke:0.22px #111;">Sofa</span>
<span class="t" style="left:299.60px;top:357px;font-size:15.50px;color:#111;letter-spacing:0.312px;-webkit-text-stroke:0.22px #111;">Furniture</span>
<span class="t" style="left:394.16px;top:357px;font-size:15.50px;color:#111;letter-spacing:-0.458px;-webkit-text-stroke:0.22px #111;">899.00</span>
<span class="t" style="left:446.54px;top:357px;font-size:15.50px;color:#111;letter-spacing:0.342px;-webkit-text-stroke:0.22px #111;">12/04/2024</span>
<span class="t" style="left:533.80px;top:357px;font-size:15.50px;color:#111;letter-spacing:-0.147px;-webkit-text-stroke:0.22px #111;">Shipped</span>
<span class="t" style="left:605.90px;top:357px;font-size:15.50px;color:#111;letter-spacing:-0.500px;-webkit-text-stroke:0.22px #111;">High</span>
<span class="t" style="left:669.60px;top:357px;font-size:15.50px;color:#111;letter-spacing:0.190px;-webkit-text-stroke:0.22px #111;">West</span>
<span class="t" style="left:724.50px;top:357px;font-size:15.50px;color:#111;letter-spacing:0.190px;-webkit-text-stroke:0.22px #111;">Yellow</span>
<span class="t" style="left:48.01px;top:379px;font-size:15.50px;color:#111;letter-spacing:-0.500px;-webkit-text-stroke:0.22px #111;">1008</span>
<span class="t" style="left:87.60px;top:379px;font-size:15.50px;color:#111;letter-spacing:0.043px;-webkit-text-stroke:0.22px #111;">Olivia Brown</span>
<span class="t" style="left:206.60px;top:379px;font-size:15.50px;color:#111;letter-spacing:-0.112px;-webkit-text-stroke:0.22px #111;">Mouse</span>
<span class="t" style="left:299.60px;top:379px;font-size:15.50px;color:#111;letter-spacing:-0.230px;-webkit-text-stroke:0.22px #111;">Electronics</span>
<span class="t" style="left:402.47px;top:379px;font-size:15.50px;color:#111;letter-spacing:-0.500px;-webkit-text-stroke:0.22px #111;">25.50</span>
<span class="t" style="left:446.54px;top:379px;font-size:15.50px;color:#111;letter-spacing:0.342px;-webkit-text-stroke:0.22px #111;">30/03/2024</span>
<span class="t" style="left:533.80px;top:379px;font-size:15.50px;color:#111;letter-spacing:-0.284px;-webkit-text-stroke:0.22px #111;">Canceled</span>
<span class="t" style="left:605.90px;top:379px;font-size:15.50px;color:#111;letter-spacing:-0.500px;-webkit-text-stroke:0.22px #111;">Low</span>
<span class="t" style="left:669.60px;top:379px;font-size:15.50px;color:#111;letter-spacing:0.290px;-webkit-text-stroke:0.22px #111;">North</span>
<span class="t" style="left:724.50px;top:379px;font-size:15.50px;color:#111;letter-spacing:-0.500px;-webkit-text-stroke:0.22px #111;">Blue</span>
<span class="t" style="left:48.01px;top:402px;font-size:15.50px;color:#111;letter-spacing:-0.500px;-webkit-text-stroke:0.22px #111;">1006</span>
<span class="t" style="left:87.60px;top:402px;font-size:15.50px;color:#111;letter-spacing:0.117px;-webkit-text-stroke:0.22px #111;">Sophia Miller</span>
<span class="t" style="left:206.60px;top:402px;font-size:15.50px;color:#111;letter-spacing:-0.292px;-webkit-text-stroke:0.22px #111;">Headphones</span>
<span class="t" style="left:299.60px;top:402px;font-size:15.50px;color:#111;letter-spacing:-0.230px;-webkit-text-stroke:0.22px #111;">Electronics</span>
<span class="t" style="left:394.16px;top:402px;font-size:15.50px;color:#111;letter-spacing:-0.458px;-webkit-text-stroke:0.22px #111;">130.00</span>
<span class="t" style="left:446.54px;top:402px;font-size:15.50px;color:#111;letter-spacing:0.342px;-webkit-text-stroke:0.22px #111;">08/03/2024</span>
<span class="t" style="left:533.80px;top:402px;font-size:15.50px;color:#111;letter-spacing:-0.147px;-webkit-text-stroke:0.22px #111;">Shipped</span>
<span class="t" style="left:605.90px;top:402px;font-size:15.50px;color:#111;letter-spacing:0.580px;-webkit-text-stroke:0.22px #111;">Medium</span>
<span class="t" style="left:669.60px;top:402px;font-size:15.50px;color:#111;letter-spacing:-0.500px;-webkit-text-stroke:0.22px #111;">East</span>
<span class="t" style="left:724.50px;top:402px;font-size:15.50px;color:#111;letter-spacing:-0.500px;-webkit-text-stroke:0.22px #111;">Green</span>
<div class="b" style="left:239.30px;top:272.80px;width:564.00px;height:256.80px;background:#f0f0f0;border-radius:8px;box-shadow:0 0 0 1px rgba(0,0,0,.18),0 10px 22px rgba(0,0,0,.38),0 2px 6px rgba(0,0,0,.25);"></div>
<div class="b" style="left:239.30px;top:272.80px;width:564.00px;height:27.40px;background:linear-gradient(90deg,#e2f4ed 0%,#e9f6f1 45%,#f1f5ea 80%,#f5f4e6 100%);border-radius:8px 8px 0 0;"></div>
<span class="t" style="left:246.60px;top:283px;font-size:11.10px;color:#1b1b1b;letter-spacing:0.011px;">Sort</span>
<span class="t" style="left:733.90px;top:282px;font-size:11.50px;color:#1b1b1b;">?</span>
<svg class="b" style="left:774.40px;top:281.80px;" width="11" height="11" viewBox="0 0 11 11"><path d="M0.6 0.6 L10.4 10.4 M10.4 0.6 L0.6 10.4" stroke="#1b1b1b" stroke-width="1.05" fill="none"/></svg>
<div class="b" style="left:244.80px;top:309.10px;width:78.30px;height:23.00px;background:#fdfdfd;border:1px solid #e0e0e0;border-bottom-color:#d2d2d2;border-radius:4px;box-sizing:border-box;"></div>
<div class="b" style="left:326.30px;top:309.10px;width:87.30px;height:23.00px;background:#fdfdfd;border:1px solid #e0e0e0;border-bottom-color:#d2d2d2;border-radius:4px;box-sizing:border-box;"></div>
<div class="b" style="left:416.30px;top:309.10px;width:83.10px;height:23.00px;background:#fdfdfd;border:1px solid #e0e0e0;border-bottom-color:#d2d2d2;border-radius:4px;box-sizing:border-box;"></div>
<div class="b" style="left:503.80px;top:309.10px;width:23.10px;height:23.00px;background:#fdfdfd;border:1px solid #e0e0e0;border-bottom-color:#d2d2d2;border-radius:4px;box-sizing:border-box;"></div>
<div class="b" style="left:529.80px;top:309.10px;width:23.30px;height:23.00px;background:#fdfdfd;border:1px solid #e0e0e0;border-bottom-color:#d2d2d2;border-radius:4px;box-sizing:border-box;"></div>
<div class="b" style="left:555.60px;top:309.10px;width:60.00px;height:23.00px;background:#fdfdfd;border:1px solid #e0e0e0;border-bottom-color:#d2d2d2;border-radius:4px;box-sizing:border-box;"></div>
<div class="b" style="left:501.00px;top:308.50px;width:1.00px;height:24.00px;background:#5e5e5e;"></div>
<span class="t" style="left:270.70px;top:317px;font-size:9.85px;color:#1b1b1b;transform:scaleY(1.08);transform-origin:0 8px;"><u>A</u>dd Level</span>
<span class="t" style="left:351.40px;top:317px;font-size:9.70px;color:#1b1b1b;letter-spacing:-0.030px;transform:scaleY(1.08);transform-origin:0 8px;"><u>D</u>elete Level</span>
<span class="t" style="left:442.70px;top:317px;font-size:9.70px;color:#1b1b1b;letter-spacing:-0.083px;transform:scaleY(1.08);transform-origin:0 8px;"><u>C</u>opy Level</span>
<span class="t" style="left:565.20px;top:317px;font-size:9.90px;color:#1b1b1b;letter-spacing:-0.008px;transform:scaleY(1.08);transform-origin:0 8px;"><u>O</u>ptions...</span>
<span class="t" style="left:700.90px;top:317px;font-size:10.05px;color:#1b1b1b;letter-spacing:0.013px;transform:scaleY(1.08);transform-origin:0 8px;">My data has <u>h</u>eaders</span>
<svg class="b" style="left:253.00px;top:313.40px;" width="14.4" height="14.4" viewBox="0 0 14.4 14.4"><path d="M7.2 0.4 V14 M0.4 7.2 H14" stroke="#2c9a4b" stroke-width="1.15" fill="none" stroke-linecap="round"/></svg>
<svg class="b" style="left:335.00px;top:314.60px;" width="12.4" height="12.4" viewBox="0 0 12.4 12.4"><path d="M0.7 0.7 L11.7 11.7 M11.7 0.7 L0.7 11.7" stroke="#d83b3b" stroke-width="1.15" fill="none" stroke-linecap="round"/></svg>
<svg class="b" style="left:423.50px;top:313.00px;" width="17" height="15.5" viewBox="0 0 17 15.5"><path d="M4.6 11.6 H1.4 a0.9 0.9 0 0 1 -0.9 -0.9 V1.4 a0.9 0.9 0 0 1 0.9 -0.9 H7 L9.4 2.9" fill="none" stroke="#3b3b3b" stroke-width="1"/>
<path d="M6.2 3.4 H11.8 L15.6 7.2 V14.1 a0.9 0.9 0 0 1 -0.9 0.9 H6.2 a0.9 0.9 0 0 1 -0.9 -0.9 V4.3 a0.9 0.9 0 0 1 0.9 -0.9 Z" fill="#fdfdfd" stroke="#3b3b3b" stroke-width="1"/>
<path d="M11.6 3.6 V7.4 H15.4" fill="none" stroke="#3b3b3b" stroke-width="1"/>
<path d="M7.8 9.6 H13.2 M7.8 12 H13.2" stroke="#3b3b3b" stroke-width="1"/></svg>
<svg class="b" style="left:510.40px;top:317.10px;" width="9.8" height="6" viewBox="0 0 9.8 6"><path d="M0.6 5.4 L4.9 0.9 L9.2 5.4" fill="none" stroke="#1e7fd0" stroke-width="1.2" stroke-linecap="round" stroke-linejoin="round"/></svg>
<svg class="b" style="left:536.60px;top:318.00px;" width="9.8" height="6" viewBox="0 0 9.8 6"><path d="M0.6 0.6 L4.9 5.1 L9.2 0.6" fill="none" stroke="#b5b5b5" stroke-width="1.1" stroke-linecap="round" stroke-linejoin="round"/></svg>
<div class="b" style="left:682.00px;top:314.00px;width:12.00px;height:12.00px;background:#1668c2;border-radius:2.5px;"></div>
<svg class="b" style="left:682.00px;top:314.00px;" width="12" height="12" viewBox="0 0 12 12"><path d="M2.9 6.3 L5 8.4 L9.2 3.9" fill="none" stroke="#fff" stroke-width="1.1" stroke-linecap="round" stroke-linejoin="round"/></svg>
<div class="b" style="left:244.00px;top:336.00px;width:552.00px;height:159.00px;background:#fff;border:1px solid #989ba4;"></div>
<div class="b" style="left:431.60px;top:338.00px;width:1.00px;height:19.50px;background:#e3e3e3;"></div>
<div class="b" style="left:617.60px;top:338.00px;width:1.00px;height:19.50px;background:#e3e3e3;"></div>
<span class="t" style="left:250.20px;top:343px;font-size:9.70px;color:#1b1b1b;letter-spacing:-0.123px;transform:scaleY(1.08);transform-origin:0 8px;">Column</span>
<span class="t" style="left:436.40px;top:343px;font-size:9.90px;color:#1b1b1b;transform:scaleY(1.08);transform-origin:0 8px;">Sort On</span>
<span class="t" style="left:622.70px;top:342px;font-size:10.50px;color:#1b1b1b;letter-spacing:-0.007px;transform:scaleY(1.08);transform-origin:0 9px;">Order</span>
<div class="b" style="left:245.00px;top:378.80px;width:551.00px;height:20.00px;background:#e6e6ea;"></div>
<div class="b" style="left:292.00px;top:358.80px;width:131.00px;height:18.80px;background:#fff;border:1px solid #cfcfcf;border-bottom-color:#b0b0b0;box-sizing:border-box;border-radius:1px;"></div>
<div class="b" style="left:405.80px;top:360.60px;width:15.40px;height:15.20px;background:#fdfdfd;border:1px solid #dedede;border-radius:2.5px;box-sizing:border-box;"></div>
<svg class="b" style="left:409.90px;top:366.50px;" width="7.2" height="4" viewBox="0 0 7.2 4"><path d="M0.6 0.6 L3.6 3.4 L6.6000000000000005 0.6" fill="none" stroke="#6a6a6a" stroke-width="0.9" stroke-linecap="round" stroke-linejoin="round"/></svg>
<div class="b" style="left:433.30px;top:358.80px;width:175.50px;height:18.80px;background:#fff;border:1px solid #cfcfcf;border-bottom-color:#b0b0b0;box-sizing:border-box;border-radius:1px;"></div>
<div class="b" style="left:591.60px;top:360.60px;width:15.40px;height:15.20px;background:#fdfdfd;border:1px solid #dedede;border-radius:2.5px;box-sizing:border-box;"></div>
<svg class="b" style="left:595.70px;top:366.50px;" width="7.2" height="4" viewBox="0 0 7.2 4"><path d="M0.6 0.6 L3.6 3.4 L6.6000000000000005 0.6" fill="none" stroke="#6a6a6a" stroke-width="0.9" stroke-linecap="round" stroke-linejoin="round"/></svg>
<div class="b" style="left:619.30px;top:358.80px;width:175.70px;height:18.80px;background:#fff;border:1px solid #cfcfcf;border-bottom-color:#b0b0b0;box-sizing:border-box;border-radius:1px;"></div>
<div class="b" style="left:777.80px;top:360.60px;width:15.40px;height:15.20px;background:#fdfdfd;border:1px solid #dedede;border-radius:2.5px;box-sizing:border-box;"></div>
<svg class="b" style="left:781.90px;top:366.50px;" width="7.2" height="4" viewBox="0 0 7.2 4"><path d="M0.6 0.6 L3.6 3.4 L6.6000000000000005 0.6" fill="none" stroke="#6a6a6a" stroke-width="0.9" stroke-linecap="round" stroke-linejoin="round"/></svg>
<div class="b" style="left:292.00px;top:380.00px;width:131.00px;height:18.40px;background:#fff;border:1px solid #cfcfcf;border-bottom-color:#b0b0b0;box-sizing:border-box;border-radius:1px;"></div>
<div class="b" style="left:405.80px;top:381.80px;width:15.40px;height:14.80px;background:#fdfdfd;border:1px solid #dedede;border-radius:2.5px;box-sizing:border-box;"></div>
<svg class="b" style="left:409.90px;top:387.50px;" width="7.2" height="4" viewBox="0 0 7.2 4"><path d="M0.6 0.6 L3.6 3.4 L6.6000000000000005 0.6" fill="none" stroke="#6a6a6a" stroke-width="0.9" stroke-linecap="round" stroke-linejoin="round"/></svg>
<div class="b" style="left:433.30px;top:380.00px;width:175.50px;height:18.40px;background:#fff;border:1px solid #cfcfcf;border-bottom-color:#b0b0b0;box-sizing:border-box;border-radius:1px;"></div>
<div class="b" style="left:591.60px;top:381.80px;width:15.40px;height:14.80px;background:#fdfdfd;border:1px solid #dedede;border-radius:2.5px;box-sizing:border-box;"></div>
<svg class="b" style="left:595.70px;top:387.50px;" width="7.2" height="4" viewBox="0 0 7.2 4"><path d="M0.6 0.6 L3.6 3.4 L6.6000000000000005 0.6" fill="none" stroke="#6a6a6a" stroke-width="0.9" stroke-linecap="round" stroke-linejoin="round"/></svg>
<div class="b" style="left:619.30px;top:380.00px;width:175.70px;height:18.40px;background:#fff;border:1px solid #cfcfcf;border-bottom-color:#b0b0b0;box-sizing:border-box;border-radius:1px;"></div>
<div class="b" style="left:777.80px;top:381.80px;width:15.40px;height:14.80px;background:#fdfdfd;border:1px solid #dedede;border-radius:2.5px;box-sizing:border-box;"></div>
<svg class="b" style="left:781.90px;top:387.50px;" width="7.2" height="4" viewBox="0 0 7.2 4"><path d="M0.6 0.6 L3.6 3.4 L6.6000000000000005 0.6" fill="none" stroke="#6a6a6a" stroke-width="0.9" stroke-linecap="round" stroke-linejoin="round"/></svg>
<div class="b" style="left:293.80px;top:381.80px;width:110.50px;height:14.60px;background:#9ccbf0;outline:1px dotted #4a4a4a;outline-offset:-1px;"></div>
<span class="t" style="left:295.70px;top:364px;font-size:9.85px;color:#1b1b1b;letter-spacing:0.008px;transform:scaleY(1.08);transform-origin:0 8px;">Customer Name</span>
<span class="t" style="left:436.40px;top:364px;font-size:9.70px;color:#1b1b1b;letter-spacing:-0.025px;transform:scaleY(1.08);transform-origin:0 8px;">Cell Values</span>
<span class="t" style="left:622.70px;top:364px;font-size:10.25px;color:#1b1b1b;letter-spacing:0.009px;transform:scaleY(1.08);transform-origin:0 8px;">A to Z</span>
<span class="t" style="left:295.70px;top:385px;font-size:9.95px;color:#1b1b1b;letter-spacing:0.011px;transform:scaleY(1.08);transform-origin:0 8px;">Order Date</span>
<span class="t" style="left:436.40px;top:385px;font-size:9.70px;color:#1b1b1b;letter-spacing:-0.025px;transform:scaleY(1.08);transform-origin:0 8px;">Cell Values</span>
<span class="t" style="left:622.70px;top:385px;font-size:10.15px;color:#1b1b1b;transform:scaleY(1.08);transform-origin:0 8px;">Oldest to Newest</span>
<span class="t" style="left:248.40px;top:361px;font-size:9.80px;color:#1b1b1b;letter-spacing:0.006px;transform:scaleY(1.08);transform-origin:0 8px;">Sort by</span>
<span class="t" style="left:247.80px;top:381px;font-size:9.70px;color:#1b1b1b;letter-spacing:-0.061px;transform:scaleY(1.08);transform-origin:0 8px;">Then by</span>
<div class="b" style="left:654.00px;top:500.80px;width:66.80px;height:22.00px;background:#fdfdfd;border:1.5px solid #1a6fc6;border-radius:4.5px;box-sizing:border-box;"></div>
<div class="b" style="left:730.30px;top:500.80px;width:66.30px;height:22.00px;background:#fdfdfd;border:1px solid #e0e0e0;border-bottom-color:#d2d2d2;border-radius:4px;box-sizing:border-box;"></div>
<span class="t" style="left:680.90px;top:508px;font-size:9.70px;color:#1b1b1b;letter-spacing:-0.500px;transform:scaleY(1.08);transform-origin:0 8px;">OK</span>
<span class="t" style="left:749.20px;top:508px;font-size:9.70px;color:#1b1b1b;letter-spacing:-0.223px;transform:scaleY(1.08);transform-origin:0 8px;">Cancel</span>
<div class="b" style="left:799.20px;top:521.20px;width:1.50px;height:1.50px;background:#9a9a9a;"></div>
<div class="b" style="left:796.20px;top:524.20px;width:1.50px;height:1.50px;background:#9a9a9a;"></div>
<div class="b" style="left:799.20px;top:524.20px;width:1.50px;height:1.50px;background:#9a9a9a;"></div>
<div class="b" style="left:793.20px;top:527.20px;width:1.50px;height:1.50px;background:#9a9a9a;"></div>
<div class="b" style="left:796.20px;top:527.20px;width:1.50px;height:1.50px;background:#9a9a9a;"></div>
<div class="b" style="left:799.20px;top:527.20px;width:1.50px;height:1.50px;background:#9a9a9a;"></div>
<svg class="b" style="left:312.50px;top:-4.00px;" width="47.50" height="27.80"><rect x="1.05" y="1.05" width="45.40" height="25.70" rx="0" fill="none" stroke="#20e308" stroke-width="2.1"/></svg>
<svg class="b" style="left:551.90px;top:21.10px;" width="47.30" height="58.90"><rect x="1.05" y="1.05" width="45.20" height="56.80" rx="0" fill="none" stroke="#20e308" stroke-width="2.1"/></svg>
<svg class="b" style="left:236.90px;top:299.90px;" width="89.30" height="37.10"><rect x="1.05" y="1.05" width="87.20" height="35.00" rx="0" fill="none" stroke="#20e308" stroke-width="2.1"/></svg>
<svg class="b" style="left:667.00px;top:302.00px;" width="132.00" height="30.80"><rect x="1.05" y="1.05" width="129.90" height="28.70" rx="0" fill="none" stroke="#20e308" stroke-width="2.1"/></svg>
<svg class="b" style="left:247.00px;top:343.80px;" width="557.40" height="77.00"><rect x="1.05" y="1.05" width="555.30" height="74.90" rx="0" fill="none" stroke="#20e308" stroke-width="2.1"/></svg>
<svg class="b" style="left:642.00px;top:489.00px;" width="84.30" height="39.30"><rect x="1.05" y="1.05" width="82.20" height="37.20" rx="0" fill="none" stroke="#20e308" stroke-width="2.1"/></svg>
</body></html>
